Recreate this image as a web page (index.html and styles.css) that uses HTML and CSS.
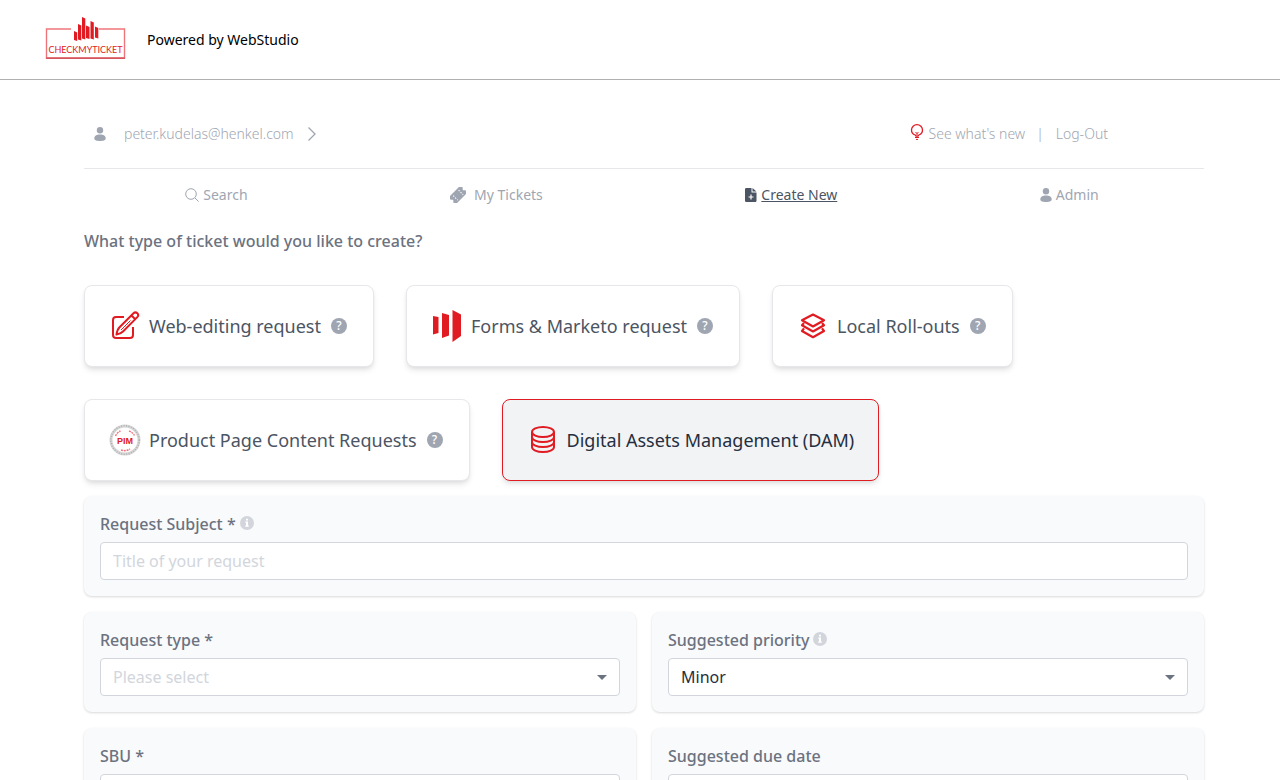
FILE: index.html
```html
<!DOCTYPE html>
<html lang="en">
<head>
<meta charset="utf-8">
<title>CheckMyTicket</title>
<meta name="viewport" content="width=device-width, initial-scale=1">
<link rel="stylesheet" href="styles.css">
</head>
<body>
<header class="topbar">
  <svg class="logo" width="82" height="44" viewBox="0 0 82 44" role="img" aria-label="CheckMyTicket">
    <path d="M26 13H1.500V42H79.500V13H54" fill="none" stroke="#f0757a" stroke-width="1.400"/>
    <path d="M1 42.200H80" stroke="#d4555b" stroke-width="1.400"/>
    <g fill="#e11b22">
      <path d="M29 15l3.200 1.500v8.500l-3.200-1z"/>
      <path d="M33 8l3.300 1.500v15l-3.300-1z"/>
      <path d="M37 1l3.300 1.500v21l-3.300-1z"/>
      <path d="M41 9.500l3.500 1.500v12l-3.500-1z"/>
      <path d="M45.500 5l3.300 1.500v17l-3.300-1z"/>
      <path d="M50 10.500l3.300 1.500v10.500l-3.300-1z"/>
    </g>
    <text class="logo-text" x="40.500" y="37" text-anchor="middle">CHECKMYTICKET</text>
  </svg>
  <span class="powered">Powered by WebStudio</span>
</header>

<main class="page">
  <div class="account">
    <a class="account-user" href="#">
      <svg class="user-icon" width="12" height="14" viewBox="0 0 12 14" fill="currentColor"><circle cx="6" cy="3.200" r="3.200"/><path d="M0.300 11.500C.3 8.500 2.500 7.400 6 7.400s5.700 1.100 5.700 4.100C11.700 13.300 9 14 6 14S.3 13.300.3 11.500z"/></svg>
      <span>peter.kudelas@henkel.com</span>
      <svg class="chevron" width="10" height="16" viewBox="0 0 10 16" fill="none" stroke="currentColor" stroke-width="1.300"><path d="M1.500 1.500L8 8l-6.500 6.500"/></svg>
    </a>
    <div class="account-links">
      <a class="news" href="#">
        <svg class="bulb" width="14" height="16" viewBox="0 0 14 16" fill="none" stroke="#e11b22" stroke-width="1.300"><path d="M5.200 11C3 10.200 1.500 8.300 1.500 6a5.500 5.300 0 0 1 11 0c0 2.300-1.500 4.200-3.700 5L8 12.200H6z"/><path d="M7 11.500V9M5.500 8L7 9.500 8.500 8M5 13.500h4M6 15.400h2" stroke-width="1"/></svg>
        <span>See what's new</span>
      </a>
      <span class="divider">|</span>
      <a href="#">Log-Out</a>
    </div>
  </div>

  <nav class="tabs">
    <a class="tab" href="#">
      <svg width="14" height="14" viewBox="0 0 14 14" fill="none" stroke="currentColor"><circle cx="6" cy="6" r="5.300"/><path d="M10 10l3.600 3.600"/></svg>
      <span>Search</span>
    </a>
    <a class="tab tab-wide" href="#">
      <svg width="16" height="16" viewBox="0 0 16 16"><g transform="rotate(-45 8 8)"><path fill="currentColor" d="M-.5 3h17v3.600a1.400 1.400 0 0 0 0 2.800V13h-17V9.400a1.400 1.400 0 0 0 0-2.800z"/><path stroke="#fff" stroke-width="1" stroke-dasharray="1.400 1.400" d="M4.200 5v6.500M11.800 5v6.500"/></g></svg>
      <span>My Tickets</span>
    </a>
    <a class="tab tab-active" href="#" aria-current="page">
      <svg width="12" height="14" viewBox="0 0 12 14" fill="currentColor"><path d="M1.200 0H6.500V4.500H11.500V12.800a1.200 1.200 0 0 1-1.200 1.200H1.200A1.200 1.200 0 0 1 0 12.800V1.200A1.200 1.200 0 0 1 1.200 0zM7.500 0l4 3.600H7.500z"/><path stroke="#fff" stroke-width="1.200" d="M6 6.500v5M3.500 9h5"/></svg>
      <span>Create New</span>
    </a>
    <a class="tab" href="#">
      <svg width="12" height="14" viewBox="0 0 12 14" fill="currentColor"><circle cx="6" cy="3.200" r="3.200"/><path d="M0.300 11.500C.3 8.500 2.500 7.400 6 7.400s5.700 1.100 5.700 4.100C11.700 13.300 9 14 6 14S.3 13.300.3 11.500z"/></svg>
      <span>Admin</span>
    </a>
  </nav>

  <h1 class="question">What type of ticket would you like to create?</h1>

  <div class="types">
    <div class="type">
      <button class="type-main" type="button">
        <svg width="32" height="32" viewBox="0 0 32 32" fill="none" stroke="#e11b22" stroke-width="2" stroke-linejoin="round"><path d="M15 7H7A3 3 0 0 0 4 10V25a3 3 0 0 0 3 3H21a3 3 0 0 0 3-3V17"/><path d="M7.500 24.500C8 21.500 8.800 19 10.300 17.500L24.500 3.300a2.550 2.550 0 0 1 3.800 3.800L14 21.500C12.500 23 10.500 24 7.500 24.500zM22.500 5.500l3.800 3.800"/><path d="M12 20l9.500-9.500" stroke-width="1"/></svg>
        <span>Web-editing request</span>
      </button>
      <button class="help" type="button" aria-label="About web-editing requests"><span class="help-mark">?</span></button>
    </div>
    <div class="type">
      <button class="type-main" type="button">
        <svg width="32" height="32" viewBox="0 0 32 32" fill="#e11b22"><path d="M2 6l5.500 1v16L2 24.500zM11 3l7 2v20.500L11 28zM21.500 0L30 4.500v21.500L21.500 32z"/></svg>
        <span>Forms &amp; Marketo request</span>
      </button>
      <button class="help" type="button" aria-label="About forms and Marketo requests"><span class="help-mark">?</span></button>
    </div>
    <div class="type">
      <button class="type-main" type="button">
        <svg width="32" height="32" viewBox="0 0 32 32" fill="none" stroke="#e11b22" stroke-width="2.200" stroke-linejoin="round"><path d="M16 4.500L27 10.300 16 16.500 5 10.300z"/><path d="M7 13L5 15.300l11 6.200 11-6.200L25 13M7 18.300L5 21l11 6.200L27 21l-2-2.700"/></svg>
        <span>Local Roll-outs</span>
      </button>
      <button class="help" type="button" aria-label="About local roll-outs"><span class="help-mark">?</span></button>
    </div>
    <div class="type">
      <button class="type-main" type="button">
        <svg width="32" height="32" viewBox="0 0 32 32" fill="none"><circle cx="16" cy="16" r="14" stroke="#d6d6d6" stroke-width="3"/><circle cx="16" cy="16" r="14.200" stroke="#b0b0b0" stroke-width="1.500" stroke-dasharray="1 1.500"/><path d="M6.500 12a10 10 0 0 1 5-5M20 7a10 10 0 0 1 5.500 4.500M12 26a10 10 0 0 0 9-1" stroke="#f0787d" stroke-width="1.500" stroke-dasharray="2 .8"/><text class="pim" x="16" y="19.500" text-anchor="middle">PIM</text></svg>
        <span>Product Page Content Requests</span>
      </button>
      <button class="help" type="button" aria-label="About product page content requests"><span class="help-mark">?</span></button>
    </div>
    <div class="type type-selected">
      <button class="type-main" type="button" aria-pressed="true">
        <svg width="32" height="32" viewBox="0 0 32 32" fill="none" stroke="#e11b22" stroke-width="2"><ellipse cx="16" cy="8" rx="11" ry="5"/><path d="M5 8v15c0 2.800 5 5 11 5s11-2.200 11-5V8M5 13c0 2.800 5 5 11 5s11-2.200 11-5M5 18c0 2.800 5 5 11 5s11-2.200 11-5"/></svg>
        <span>Digital Assets Management (DAM)</span>
      </button>
    </div>
  </div>

  <form class="fields">
    <div class="field field-full">
      <div class="field-head"><label for="subject">Request Subject *</label><svg class="info" width="14" height="14" viewBox="0 0 14 14"><circle cx="7" cy="7" r="7" fill="#d2d6dc"/><path fill="#fff" d="M6 2.700h2v1.800H6zM5.300 5.500H8v4h.8v1.300H5.200V9.500H6V6.800h-.7z"/></svg></div>
      <input class="control" id="subject" type="text" placeholder="Title of your request">
    </div>
    <div class="field">
      <div class="field-head"><label for="type">Request type *</label></div>
      <div class="select-wrap"><select class="control control-empty" id="type"><option>Please select</option></select></div>
    </div>
    <div class="field">
      <div class="field-head"><label for="priority">Suggested priority</label><svg class="info" width="14" height="14" viewBox="0 0 14 14"><circle cx="7" cy="7" r="7" fill="#d2d6dc"/><path fill="#fff" d="M6 2.700h2v1.800H6zM5.300 5.500H8v4h.8v1.300H5.200V9.500H6V6.800h-.7z"/></svg></div>
      <div class="select-wrap"><select class="control" id="priority"><option>Minor</option></select></div>
    </div>
    <div class="field">
      <div class="field-head"><label for="sbu">SBU *</label></div>
      <div class="select-wrap"><select class="control control-empty" id="sbu"><option>Please select</option></select></div>
    </div>
    <div class="field">
      <div class="field-head"><label for="due">Suggested due date</label></div>
      <input class="control" id="due" type="text">
    </div>
  </form>
</main>
</body>
</html>
```
FILE: styles.css
```css
*,
*::before,
*::after {
  box-sizing: border-box;
}

body {
  margin: 0;
  background: #fff;
  color: #6b7280;
  font: 16px/24px "Noto Sans", sans-serif;
}

a {
  color: inherit;
  text-decoration: none;
}

svg {
  flex: none;
}

button {
  padding: 0;
  border: 0;
  background: none;
  color: inherit;
  font: inherit;
  cursor: pointer;
}

.topbar {
  display: flex;
  align-items: center;
  gap: 20px;
  height: 80px;
  padding: 0 45px;
  border-bottom: 1px solid #b0b0b0;
}

.logo {
  margin-bottom: 4px;
}

.logo-text {
  fill: #e11b22;
  font: 9px Lato, sans-serif;
}

.powered {
  color: #000;
  font-size: 14px;
}

.page {
  max-width: 1128px;
  margin: 0 auto;
  padding-left: 8px;
}

.account {
  display: flex;
  justify-content: space-between;
  align-items: center;
  height: 89px;
  padding: 20px 96px 0 10px;
  border-bottom: 1px solid #e5e7eb;
  color: #9fa6b2;
  font-size: 14px;
  font-weight: 300;
}

.account-user,
.account-links {
  display: flex;
  align-items: center;
}

.user-icon {
  margin-right: 18px;
}

.chevron {
  margin-left: 13px;
}

.news {
  display: flex;
  gap: 5px;
}

.bulb {
  margin-top: 2px;
}

.divider {
  margin: 0 12px 0 11px;
}

.tabs {
  display: flex;
  justify-content: space-around;
  padding: 16px 4px 16px 0;
  color: #9fa6b2;
  font-size: 14px;
  line-height: 20px;
}

.tab {
  display: flex;
  align-items: center;
  gap: 4px;
}

.tab-wide {
  gap: 8px;
}

.tab-active {
  color: #4b5563;
}

.tab-active span {
  text-decoration: underline;
}

.question {
  margin: 8px 0 32px;
  font-size: 16px;
  font-weight: 500;
}

.types {
  display: flex;
  flex-wrap: wrap;
  gap: 32px;
}

.type {
  display: flex;
  align-items: center;
  gap: 8px;
  padding: 24px;
  border: 1px solid #e5e7eb;
  border-radius: 8px;
  background: #fff;
  box-shadow: 0 4px 6px -1px rgba(0, 0, 0, 0.1), 0 2px 4px -1px rgba(0, 0, 0, 0.06);
  color: #4b5563;
  font-size: 18px;
}

.type-main {
  display: flex;
  align-items: center;
  gap: 8px;
}

.type-selected {
  border-color: #e11b22;
  background: #f2f3f5;
  color: #252f3f;
}

.help {
  display: flex;
  padding: 2px;
}

.help-mark {
  width: 16px;
  height: 16px;
  border-radius: 50%;
  background: #9fa6b2;
  color: #fff;
  font-size: 12px;
  font-weight: 500;
  line-height: 16px;
  text-align: center;
}

.pim {
  fill: #e11b22;
  font: bold 9px "Liberation Sans", sans-serif;
}

.fields {
  display: grid;
  grid-template-columns: 1fr 1fr;
  gap: 16px;
  padding: 15px 0 24px;
}

.field {
  padding: 16px;
  border-radius: 8px;
  background: #f9fafb;
  box-shadow: 0 1px 3px rgba(0, 0, 0, 0.1), 0 1px 2px rgba(0, 0, 0, 0.06);
}

.field-full {
  grid-column: 1 / -1;
}

.field-head {
  display: flex;
  gap: 4px;
  margin-bottom: 6px;
  font-weight: 500;
}

.info {
  margin-top: 4px;
}

.control {
  display: block;
  width: 100%;
  height: 38px;
  padding: 0 12px;
  border: 1px solid #d2d6dc;
  border-radius: 4px;
  background: #fff;
  color: #252f3f;
  font: inherit;
  appearance: none;
}

.control::placeholder,
.control-empty {
  color: #d2d6dc;
}

.select-wrap {
  position: relative;
}

.select-wrap::after {
  content: "";
  position: absolute;
  top: 17px;
  right: 13px;
  border: 5px solid transparent;
  border-top-color: #6b7280;
  border-bottom: 0;
  pointer-events: none;
}
```
